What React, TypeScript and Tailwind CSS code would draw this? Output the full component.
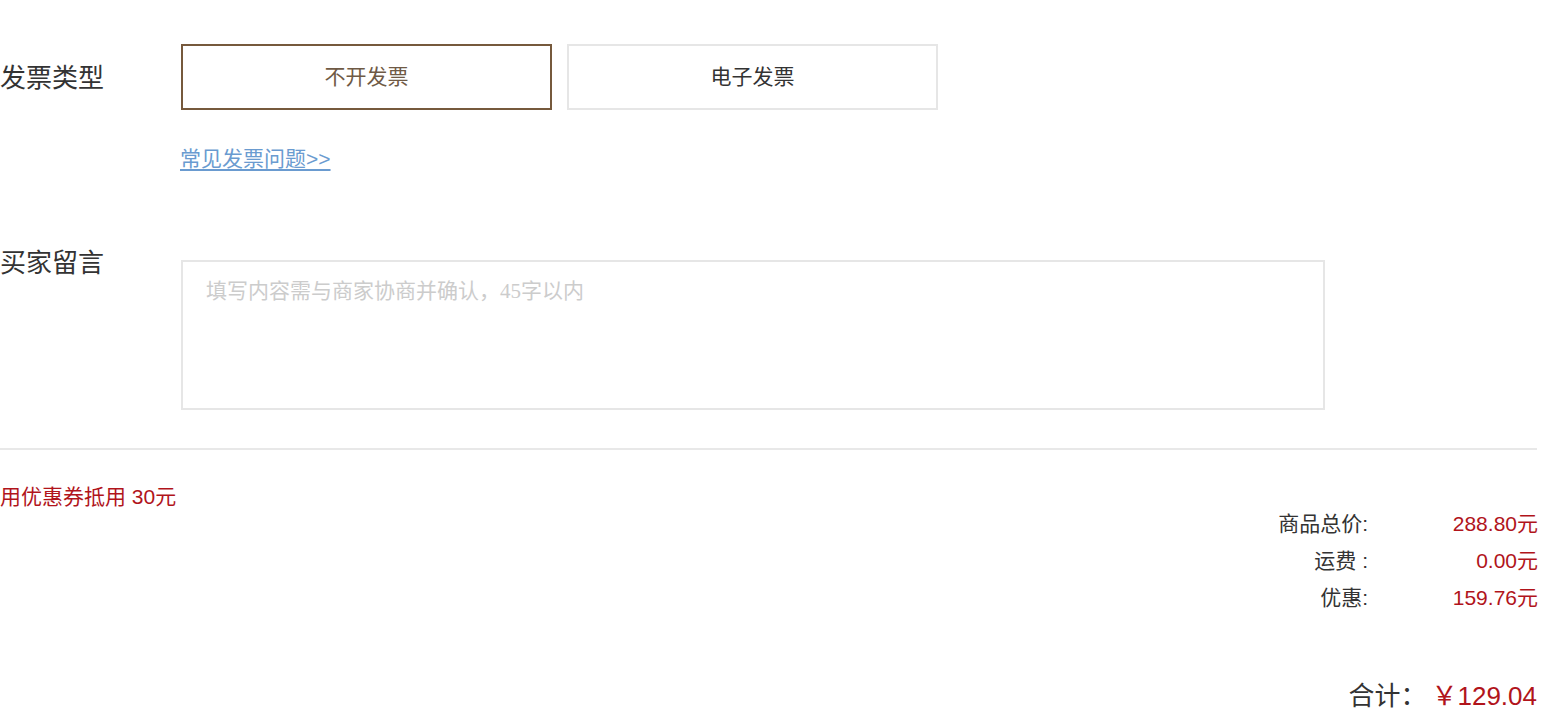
import { useState } from 'react';

const sans = 'font-["Liberation_Sans","Noto_Sans_CJK_SC",sans-serif]';

const invoiceTypes = ['不开发票', '电子发票'];

const summary = [
  { label: '商品总价:', value: '288.80元' },
  { label: '运费 :', value: '0.00元' },
  { label: '优惠:', value: '159.76元' },
];

export default function App() {
  const [invoice, setInvoice] = useState('不开发票');
  const [note, setNote] = useState('');

  return (
    <div className={`h-[709px] w-[1557px] overflow-hidden bg-white text-[#333] ${sans}`}>
      <div className="pt-[44px]">
        {/* invoice type */}
        <div className="flex">
          <div className="flex h-[66px] w-[181px] items-center pt-[2px]">
            <span className="text-[26px] leading-[30px] text-[#333]">发票类型</span>
          </div>
          <div className="flex gap-[15px]">
            {invoiceTypes.map((t) => {
              const active = t === invoice;
              return (
                <button
                  key={t}
                  type="button"
                  onClick={() => setInvoice(t)}
                  className={
                    active
                      ? 'flex h-[66px] w-[371px] items-center justify-center border-2 border-[#76593c] bg-white text-[21px] text-[#6f5a45]'
                      : 'flex h-[66px] w-[371px] items-center justify-center border-2 border-[#e6e6e6] bg-white text-[21px] text-[#333]'
                  }
                >
                  {t}
                </button>
              );
            })}
          </div>
        </div>

        <div className="ml-[180px] mt-[37px] leading-[24px]">
          <a href="#" className="text-[21px] text-[#6a9bd0] underline underline-offset-[3px]">
            常见发票问题&gt;&gt;
          </a>
        </div>

        {/* buyer message */}
        <div className="mt-[75px] flex items-start">
          <div className="w-[181px]">
            <span className="block text-[26px] leading-[30px] text-[#333]">买家留言</span>
          </div>
          <textarea
            value={note}
            onChange={(e) => setNote(e.target.value)}
            maxLength={45}
            placeholder="填写内容需与商家协商并确认，45字以内"
            className='mt-[12px] h-[150px] w-[1144px] resize-none border-2 border-[#e6e6e6] px-[23px] pt-[17px] font-["Liberation_Serif","Noto_Sans_CJK_SC",serif] text-[21px] leading-[24px] text-[#333] outline-none placeholder:text-[#cccccc]'
          />
        </div>

        <div className="mt-[38px] h-[2px] w-[1537px] bg-[#e8e8e8]" />

        {/* coupon + totals */}
        <div className="flex items-start justify-between pr-[19px]">
          <p className="mt-[35px] text-[21px] leading-[24px] text-[#b1141b]">用优惠券抵用 30元</p>
          <div className="mt-[55px] grid grid-cols-[auto_170px] text-[21px] leading-[37px]">
            {summary.map((row) => (
              <div key={row.label} className="contents">
                <span className="text-right text-[#333]">{row.label}</span>
                <span className="text-right text-[#b1141b]">{row.value}</span>
              </div>
            ))}
          </div>
        </div>

        <div className="mt-[67px] flex items-baseline justify-end pr-[20px] leading-[26px]">
          <span className="text-[26px] text-[#333]">合计：</span>
          <span className="ml-[5px] text-[26px] text-[#b1141b]">￥129.04</span>
        </div>
      </div>
    </div>
  );
}
